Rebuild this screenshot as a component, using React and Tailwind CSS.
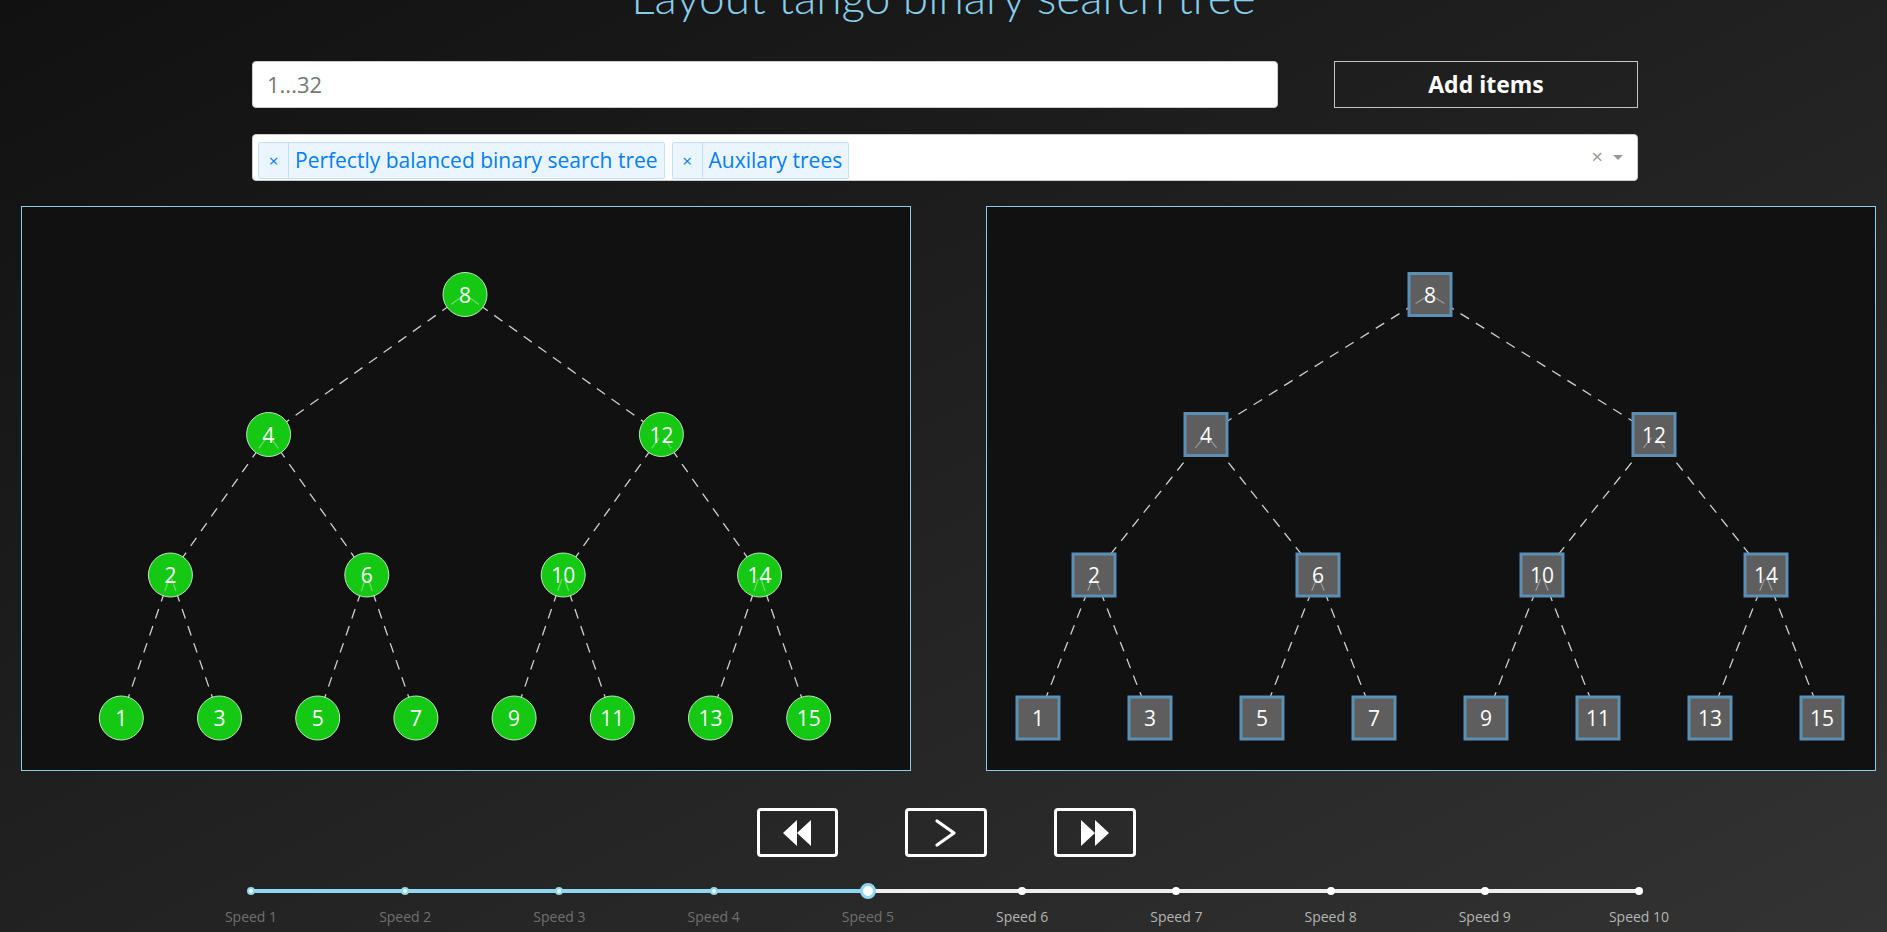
import React from 'react';

const ys = [88.5, 228.5, 369, 512];
const leafValues = [1, 3, 5, 7, 9, 11, 13, 15];

// build a perfectly balanced tree of 15 from the x of the leaves
function buildTree(spacing) {
  const levels = [];
  let level = leafValues.map((v, i) => ({ v, x: 444 + (i - 3.5) * spacing, y: ys[3] }));
  levels.unshift(level);
  for (let d = 2; d >= 0; d--) {
    const next = [];
    for (let i = 0; i < level.length; i += 2) {
      const a = level[i];
      const b = level[i + 1];
      next.push({ v: (a.v + b.v) / 2, x: (a.x + b.x) / 2, y: ys[d], kids: [a, b] });
    }
    levels.unshift(next);
    level = next;
  }
  const nodes = levels.flat();
  const edges = [];
  nodes.forEach((n) => (n.kids || []).forEach((k) => edges.push([n, k])));
  return { nodes, edges };
}

const leftTree = buildTree(98.2);
const rightTree = buildTree(112);

function TreePanel({ tree, square }) {
  return (
    <div className="w-[890px] h-[565px] border border-[#87ceeb] bg-[#111111] shrink-0">
      <svg width="888" height="563" viewBox="1 1 888 563" className="block">
        {tree.edges.map(([a, b], i) => (
          <line key={i} x1={a.x} y1={a.y} x2={b.x} y2={b.y} stroke="#cfcfcf" strokeWidth="1.3" strokeDasharray="10 8" />
        ))}
        {tree.nodes.map((n) => (
          <g key={n.v}>
            {square ? (
              <rect x={n.x - 21} y={n.y - 21} width="42" height="42" fill="#5e5e5e" stroke="#5b8fb3" strokeWidth="3" />
            ) : (
              <circle cx={n.x} cy={n.y} r="22" fill="#14c814" stroke="#bfe8bf" strokeWidth="1" />
            )}
            {(n.kids || []).map((k, i) => {
              const dx = k.x - n.x;
              const dy = k.y - n.y;
              const len = Math.sqrt(dx * dx + dy * dy);
              return (
                <line key={i} x1={n.x + (dx / len) * 4} y1={n.y + (dy / len) * 4} x2={n.x + (dx / len) * 17} y2={n.y + (dy / len) * 17} stroke="#ffffff" strokeOpacity="0.35" strokeWidth="1.3" />
              );
            })}
            <text x={n.x} y={n.y} fill="#ffffff" fontSize="21" textAnchor="middle" dominantBaseline="central" fontFamily="'Open Sans', sans-serif">
              {n.v}
            </text>
          </g>
        ))}
      </svg>
    </div>
  );
}

const speeds = [1, 2, 3, 4, 5, 6, 7, 8, 9, 10];

export default function App() {
  return (
    <div className="w-full h-[932px] overflow-hidden bg-linear-to-br from-[#111111] to-[#333333] font-['Open_Sans',sans-serif]">
      <h1 className="mt-[-26px] h-[40px] text-center text-[46px] leading-none font-light text-[#87ceeb] font-['Lato',sans-serif] whitespace-nowrap">
        Layout tango binary search tree
      </h1>

      <div className="ml-[252px] w-[1386px] mt-[47px] flex gap-[56px]">
        <div className="w-[1026px] h-[47px] bg-white rounded-[4px] border border-[#cccccc] flex items-center pl-[14px] text-[22px] text-[#777777]">
          1...32
        </div>
        <button className="w-[304px] h-[47px] border border-[#c4c4c4] text-white text-[23px] font-bold">
          Add items
        </button>
      </div>

      <div className="ml-[252px] w-[1386px] mt-[26px] h-[47px] bg-white rounded-[4px] border border-[#cccccc] flex items-end pl-[5px] pr-[14px] pb-[1px]">
        <div className="flex gap-[7px] text-[21px] text-[#007eff]">
          <div className="h-[37px] flex items-center bg-[#ebf5ff] border border-[#c2e0ff] rounded-[2px]">
            <span className="w-[30px] h-full flex items-center justify-center border-r border-[#c2e0ff] text-[17px]">×</span>
            <span className="px-[6px]">Perfectly balanced binary search tree</span>
          </div>
          <div className="h-[37px] flex items-center bg-[#ebf5ff] border border-[#c2e0ff] rounded-[2px]">
            <span className="w-[30px] h-full flex items-center justify-center border-r border-[#c2e0ff] text-[17px]">×</span>
            <span className="px-[6px]">Auxilary trees</span>
          </div>
        </div>
        <div className="ml-auto self-center flex items-center gap-[10px] text-[#999999]">
          <span className="text-[20px] leading-none">×</span>
          <span className="w-0 h-0 border-x-[5px] border-x-transparent border-t-[5px] border-t-[#999999]" />
        </div>
      </div>

      <div className="mt-[25px] pl-[21px] flex gap-[75px]">
        <TreePanel tree={leftTree} />
        <TreePanel tree={rightTree} square />
      </div>

      <div className="mt-[37px] flex justify-center gap-[67px] pl-[5px]">
        <button className="w-[81px] h-[49px] border-[3px] border-white rounded-[4px] flex items-center justify-center">
          <svg width="28" height="26" viewBox="0 0 28 26">
            <polygon points="14,0 0,13 14,26" fill="#ffffff" />
            <polygon points="28,0 14,13 28,26" fill="#ffffff" />
          </svg>
        </button>
        <button className="w-[82px] h-[49px] border-[3px] border-white rounded-[4px] flex items-center justify-center">
          <svg width="24" height="30" viewBox="0 0 24 30">
            <polyline points="3,3 20,15 3,27" fill="none" stroke="#ffffff" strokeWidth="3.2" strokeLinecap="round" strokeLinejoin="round" />
          </svg>
        </button>
        <button className="w-[82px] h-[49px] border-[3px] border-white rounded-[4px] flex items-center justify-center">
          <svg width="28" height="26" viewBox="0 0 28 26">
            <polygon points="0,0 14,13 0,26" fill="#ffffff" />
            <polygon points="14,0 28,13 14,26" fill="#ffffff" />
          </svg>
        </button>
      </div>

      <div className="relative ml-[251px] mt-[24px] w-[1388px] h-[50px]">
        <div className="absolute left-0 right-0 top-[8px] h-[4px] rounded-full bg-[#eeeeee]" />
        <div className="absolute left-0 w-[44.44%] top-[8px] h-[4px] rounded-full bg-[#8fd6f2]" />
        {speeds.map((s, i) => {
          const left = `${(i / 9) * 100}%`;
          const active = s <= 5;
          return (
            <React.Fragment key={s}>
              {s === 5 ? (
                <div className="absolute top-[2px] w-[16px] h-[16px] -ml-[8px] rounded-full bg-white border-[3px] border-[#8fd6f2]" style={{ left }} />
              ) : (
                <div className={active ? 'absolute top-[6px] w-[8px] h-[8px] -ml-[4px] rounded-full bg-white border-2 border-[#8fd6f2]' : 'absolute top-[6px] w-[8px] h-[8px] -ml-[4px] rounded-full bg-white'} style={{ left }} />
              )}
              <div className={active ? 'absolute top-[27px] w-[80px] -ml-[40px] text-center text-[14px] leading-[18px] text-[#707070]' : 'absolute top-[27px] w-[80px] -ml-[40px] text-center text-[14px] leading-[18px] text-[#b4b4b4]'} style={{ left }}>
                Speed {s}
              </div>
            </React.Fragment>
          );
        })}
      </div>
    </div>
  );
}
